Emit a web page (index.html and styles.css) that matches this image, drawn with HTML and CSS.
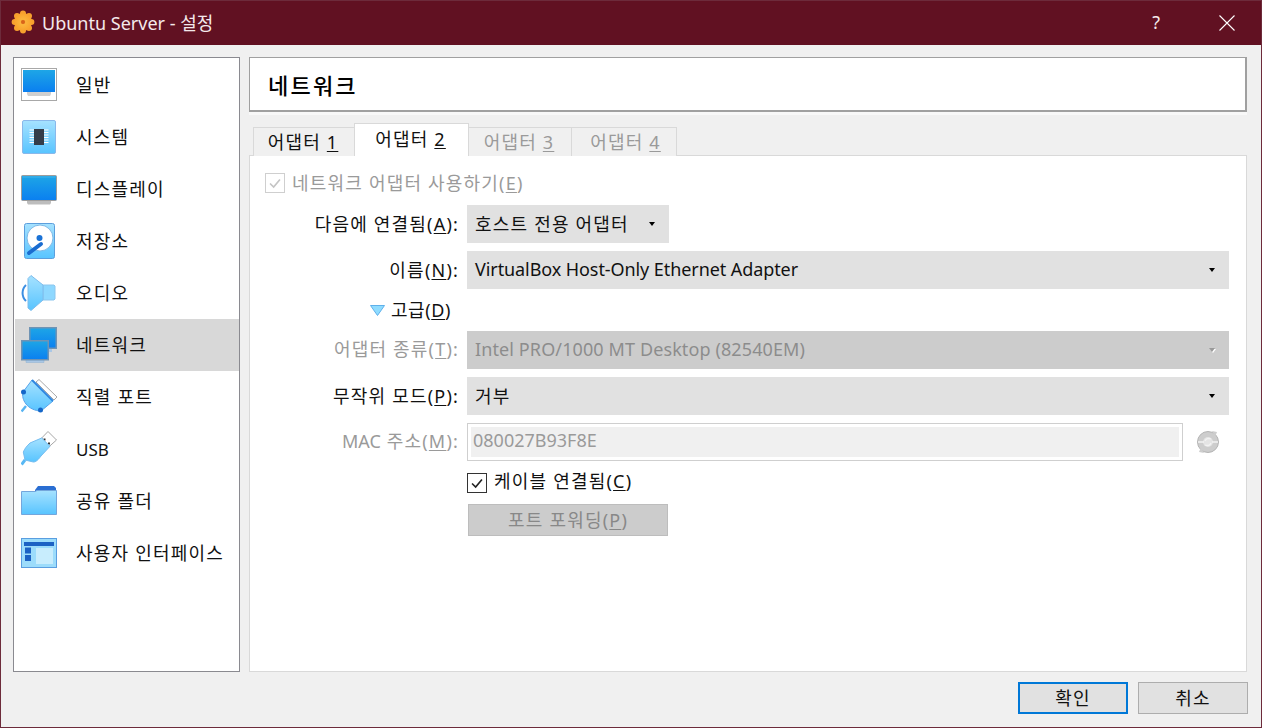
FILE: index.html
```html
<!DOCTYPE html>
<html lang="ko">
<head>
  <meta charset="UTF-8" />
  <title>Ubuntu Server - 설정</title>
  <link rel="stylesheet" href="styles.css">
</head>
<body>

  <!-- gradientes dos icones -->
  <svg class="defs" width="0" height="0">
    <defs>
      <linearGradient id="screen" x1="0" y1="0" x2="0" y2="1">
        <stop offset="0" stop-color="#1ea6e6"/>
        <stop offset="1" stop-color="#0a7ff0"/>
      </linearGradient>
      <linearGradient id="light" x1="0" y1="0" x2="0" y2="1">
        <stop offset="0" stop-color="#a6e2ff"/>
        <stop offset="1" stop-color="#58c4ff"/>
      </linearGradient>
      <radialGradient id="sun">
        <stop offset="0" stop-color="#e8761c"/>
        <stop offset="0.3" stop-color="#fbb53c"/>
        <stop offset="1" stop-color="#f9a12c"/>
      </radialGradient>
    </defs>
  </svg>

  <div class="window">
    <div class="titlebar">
      <svg class="app-icon" viewBox="0 0 24 24">
        <g fill="#f7a02e">
          <circle cx="12" cy="3.6" r="3"/>
          <circle cx="12" cy="20.4" r="3"/>
          <circle cx="3.6" cy="12" r="3"/>
          <circle cx="20.4" cy="12" r="3"/>
          <circle cx="6" cy="6" r="3"/>
          <circle cx="18" cy="6" r="3"/>
          <circle cx="6" cy="18" r="3"/>
          <circle cx="18" cy="18" r="3"/>
        </g>
        <circle cx="12" cy="12" r="9" fill="url(#sun)"/>
        <circle cx="12" cy="12" r="2" fill="#d9641a"/>
      </svg>
      <span class="title">Ubuntu Server - 설정</span>
      <span class="help">?</span>
      <svg class="close" viewBox="0 0 16 16">
        <path d="M0.5 0.5L15.5 15.5M15.5 0.5L0.5 15.5" stroke="#fff" stroke-width="1.1" fill="none"/>
      </svg>
    </div>

    <div class="content">
      <!-- lista lateral -->
      <div class="sidebar">
        <div class="side-item">
          <svg class="side-icon" viewBox="0 0 36 36">
            <rect x="0.5" y="1.5" width="35" height="32" fill="#fff" stroke="#a8a8a8"/>
            <rect x="2" y="3" width="32" height="22" fill="url(#screen)"/>
            <path d="M6 25H30V27L29 29H7L6 27Z" fill="#cfcfcf"/>
          </svg>
          <span>일반</span>
        </div>
        <div class="side-item">
          <svg class="side-icon" viewBox="0 0 36 36">
            <rect x="1.5" y="1.5" width="33" height="33" rx="1.5" fill="url(#light)" stroke="#8ab8ea"/>
            <path d="M8.5 11H27.5M8.5 13.5H27.5M8.5 16H27.5M8.5 18.5H27.5M8.5 21H27.5M8.5 23.5H27.5" stroke="#fff" stroke-width="1.2"/>
            <rect x="13" y="10" width="10" height="16" fill="#343d4a"/>
          </svg>
          <span>시스템</span>
        </div>
        <div class="side-item">
          <svg class="side-icon" viewBox="0 0 36 36">
            <path d="M6 28H30V32L29 33.5H7L6 32Z" fill="#bdbdbd"/>
            <rect x="0.5" y="4.5" width="35" height="25" rx="1" fill="url(#screen)" stroke="#9c9c9c"/>
            <rect x="1.5" y="5.5" width="33" height="1" fill="#44b4ea"/>
          </svg>
          <span>디스플레이</span>
        </div>
        <div class="side-item">
          <svg class="side-icon" viewBox="0 0 36 36">
            <rect x="3.5" y="0.5" width="30" height="35" rx="2" fill="url(#light)" stroke="#5c9edc"/>
            <circle cx="19" cy="15" r="13" fill="#fff" stroke="#7fb9e6" stroke-width="1"/>
            <circle cx="18.5" cy="15" r="3" fill="#1a72d6"/>
            <path d="M8 30L20 21" stroke="#1a6cd0" stroke-width="4" stroke-linecap="round"/>
          </svg>
          <span>저장소</span>
        </div>
        <div class="side-item">
          <svg class="side-icon" viewBox="0 0 36 36">
            <path d="M22 10H33L34 11V24L33 25H22Z" fill="#8ed8ff" stroke="#8cc6ee"/>
            <path d="M7 3.5L10 0.5L22 10V25L10 35.5L7 33Z" fill="url(#light)" stroke="#7cbcec"/>
            <path d="M5 10A11 11 0 0 0 5 26" fill="none" stroke="#3b8ee2" stroke-width="2"/>
          </svg>
          <span>오디오</span>
        </div>
        <div class="side-item active">
          <svg class="side-icon" viewBox="0 0 36 36">
            <path d="M13 21H31V25H13Z" fill="#a9c7e6"/>
            <rect x="8.75" y="0.75" width="26.5" height="20.5" fill="url(#screen)" stroke="#6f93b4" stroke-width="1.5"/>
            <path d="M5 32H23V35.5H5Z" fill="#a9c7e6" stroke="#8fb0d0" stroke-width="0.5"/>
            <rect x="0.75" y="13.75" width="26.5" height="19" fill="url(#screen)" stroke="#6f93b4" stroke-width="1.5"/>
          </svg>
          <span>네트워크</span>
        </div>
        <div class="side-item">
          <svg class="side-icon" viewBox="0 0 36 36">
            <path d="M15 3L18 0.5L36 18L33 21Z" fill="#fff" stroke="#a9a9a9"/>
            <path d="M11 1L32 22L20 32C14 32 8 29 5 25C2 21 1 17 2 13Z" fill="url(#light)" stroke="#58a4ea"/>
            <path d="M11 1L32 22" stroke="#2f86e0" stroke-width="2"/>
            <path d="M5 27L0.5 32.5" stroke="#58b4f2" stroke-width="2.5"/>
            <circle cx="2.5" cy="13" r="2.5" fill="#1566c8"/>
            <circle cx="19.5" cy="31" r="2.5" fill="#1566c8"/>
          </svg>
          <span>직렬 포트</span>
        </div>
        <div class="side-item">
          <svg class="side-icon" viewBox="0 0 36 36">
            <path d="M20.7 7L27 0.5L35.5 9L28 15.7Z" fill="#fff" stroke="#a6a6a6"/>
            <rect x="22.5" y="7.5" width="2" height="2" fill="#333"/>
            <rect x="27" y="11.5" width="2" height="2" fill="#333"/>
            <path d="M20.7 7L29 15.3L20 25C17 29 15 31 12.3 31L4 29L2.3 21C4 17 6 15 9 12Z" fill="url(#light)" stroke="#74bcf0"/>
            <path d="M4 29L0.5 33.5" stroke="#58b8f4" stroke-width="3"/>
          </svg>
          <span class="latin usb">USB</span>
        </div>
        <div class="side-item">
          <svg class="side-icon" viewBox="0 0 36 36">
            <path d="M14 7L17 3H33L35 5V9H14Z" fill="#2a6ed2"/>
            <path d="M0.5 8.5H14L16 7.5H35.5V31.5H0.5Z" fill="url(#light)" stroke="#74a6dc"/>
          </svg>
          <span>공유 폴더</span>
        </div>
        <div class="side-item">
          <svg class="side-icon" viewBox="0 0 36 36">
            <rect x="0.5" y="3.5" width="35" height="29" fill="#9cdcfb" stroke="#5a9ee0"/>
            <rect x="3" y="7" width="30" height="4" fill="#1c62c4"/>
            <rect x="4" y="12.5" width="6" height="6" fill="#1c62c4"/>
            <rect x="4" y="20" width="6" height="6" fill="#1c62c4"/>
            <rect x="15" y="13" width="17" height="16" fill="#c8edfd"/>
          </svg>
          <span>사용자 인터페이스</span>
        </div>
      </div>

      <div class="main">
        <div class="page-header">네트워크</div>

        <div class="tabs">
          <div class="tab"><span>어댑터 <u>1</u></span></div>
          <div class="tab selected"><span>어댑터 <u>2</u></span></div>
          <div class="tab off"><span>어댑터 <u>3</u></span></div>
          <div class="tab off last"><span>어댑터 <u>4</u></span></div>
        </div>

        <div class="panel">
          <div class="check-row off">
            <span class="check">
              <svg viewBox="0 0 20 20"><path d="M4.5 10.5L8.5 14.5L15.5 6" fill="none" stroke="#c4c4c4" stroke-width="1.8"/></svg>
            </span>
            <span>네트워크 어댑터 사용하기(<u>E</u>)</span>
          </div>

          <div class="form">
            <label class="form-label"><span>다음에 연결됨(<u>A</u>):</span></label>
            <div class="combo short"><span>호스트 전용 어댑터</span><i class="arrow"></i></div>

            <label class="form-label"><span>이름(<u>N</u>):</span></label>
            <div class="combo"><span class="latin name">VirtualBox Host-Only Ethernet Adapter</span><i class="arrow"></i></div>

            <div class="advanced">
              <svg class="triangle" viewBox="0 0 15 11"><path d="M0.5 0.5H14.5L7.5 10.5Z" fill="#8fdcff" stroke="#5fb0ea"/></svg>
              <span>고급(<u>D</u>)</span>
            </div>
            <div></div>

            <label class="form-label off"><span>어댑터 종류(<u>T</u>):</span></label>
            <div class="combo disabled"><span class="latin type">Intel PRO/1000 MT Desktop (82540EM)</span><i class="arrow"></i></div>

            <label class="form-label"><span>무작위 모드(<u>P</u>):</span></label>
            <div class="combo"><span>거부</span><i class="arrow"></i></div>

            <label class="form-label off"><span><span class="latin">MAC</span> 주소(<u>M</u>):</span></label>
            <div class="mac-row">
              <div class="mac-field"><span class="latin">080027B93F8E</span></div>
              <svg class="refresh" viewBox="0 0 22 24">
                <circle cx="11" cy="12" r="10.5" fill="#cdcdcd" stroke="#b4b4b4"/>
                <path d="M15 1L20 2L18 7Z" fill="#cdcdcd"/>
                <path d="M7 23L2 22L4 17Z" fill="#cdcdcd"/>
                <circle cx="11" cy="12" r="5" fill="#e4e4e4"/>
                <path d="M1 12H7M21 12H15M8 11C9 8.5 11.5 8 14 9M14 13C13 15.5 10.5 16 8 15" fill="none" stroke="#f2f2f2" stroke-width="1.3"/>
              </svg>
            </div>

            <div></div>
            <div class="check-row cable">
              <span class="check on">
                <svg viewBox="0 0 20 20"><path d="M4.5 10.5L8.5 14.5L15.5 6" fill="none" stroke="#222" stroke-width="1.8"/></svg>
              </span>
              <span>케이블 연결됨(<u>C</u>)</span>
            </div>

            <div></div>
            <div class="port-row"><div class="port-button"><span>포트 포워딩(<u>P</u>)</span></div></div>
          </div>
        </div>
      </div>
    </div>

    <div class="footer">
      <div class="button default">확인</div>
      <div class="button">취소</div>
    </div>
  </div>

</body>
</html>
```

FILE: styles.css
```css
* {
  box-sizing: border-box;
}

html, body {
  margin: 0;
  padding: 0;
}

body {
  font-family: "Noto Sans", "Noto Sans CJK KR", sans-serif;
  font-size: 18px;
  letter-spacing: 1.2px;
  color: #111;
  background-color: #f0f0f0;
}

u {
  text-underline-offset: 2px;
}

.latin {
  letter-spacing: 0;
}

.defs {
  position: absolute;
}

.window {
  width: 1262px;
  height: 728px;
  display: flex;
  flex-direction: column;
  border: 1px solid #6d2b3b;
  background-color: #f0f0f0;
  overflow: hidden;
}

/* barra de titulo */
.titlebar {
  height: 44px;
  flex: none;
  display: flex;
  align-items: center;
  padding-left: 10px;
  background-color: #611122;
  color: #f4e9eb;
}

.app-icon {
  width: 24px;
  height: 24px;
  margin-top: -3px;
}

.title {
  margin-left: 7px;
  padding-bottom: 2px;
  letter-spacing: 0;
}

.help {
  margin-left: auto;
  margin-right: 59px;
  padding-bottom: 2px;
  letter-spacing: 0;
}

.close {
  width: 16px;
  height: 16px;
  margin-right: 26px;
}

.content {
  flex: 1;
  display: flex;
  gap: 9px;
  padding: 12px 14px 0 12px;
  min-height: 0;
}

/* lista lateral */
.sidebar {
  width: 227px;
  flex: none;
  border: 1px solid #8a8a90;
  background-color: #fff;
  padding: 1px 0 0 1px;
}

.side-item {
  height: 52px;
  display: flex;
  align-items: center;
  gap: 19px;
  padding-left: 6px;
}

.side-item span {
  padding-bottom: 2px;
}

.side-item span.usb {
  font-size: 17px;
  padding-bottom: 0;
}

.side-item.active {
  background-color: #d8d8d8;
}

.side-icon {
  width: 36px;
  height: 36px;
  flex: none;
}

.main {
  flex: 1;
  display: flex;
  flex-direction: column;
}

.page-header {
  height: 55px;
  flex: none;
  display: flex;
  align-items: center;
  padding-left: 18px;
  padding-bottom: 1px;
  font-size: 22px;
  letter-spacing: 2.2px;
  font-weight: 500;
  color: #000;
  background-color: #fff;
  border: 1px solid #a0a0a0;
  border-width: 1px 2px 2px 1px;
  box-shadow: 0 3px 0 #f8f8f8;
}

/* abas */
.tabs {
  flex: none;
  height: 33px;
  margin-top: 11px;
  margin-bottom: -1px;
  padding-left: 4px;
  display: flex;
  align-items: flex-end;
  position: relative;
}

.tab {
  height: 29px;
  width: 102px;
  display: flex;
  align-items: center;
  justify-content: center;
  padding: 0 2px 2px 0;
  background-color: #f0f0f0;
  border: 1px solid #d9d9d9;
  border-bottom: none;
  margin-right: -1px;
}

.tab.selected {
  height: 33px;
  width: 115px;
  background-color: #fff;
  position: relative;
  z-index: 1;
  padding-bottom: 4px;
}

.tab.off {
  width: 104px;
  color: #9a9a9a;
}

.tab.last {
  width: 106px;
  padding-left: 5px;
}

.panel {
  flex: 1;
  background-color: #fff;
  border: 1px solid #d9d9d9;
  padding: 17px 17px 0 15px;
}

.check-row {
  display: flex;
  align-items: center;
  height: 20px;
  gap: 7px;
}

.check-row > span:last-child {
  padding-bottom: 2px;
}

.check-row.off {
  color: #9a9a9a;
}

.check {
  width: 20px;
  height: 20px;
  flex: none;
  background-color: #fff;
  border: 1px solid #cfcfcf;
}

.check.on {
  border-color: #333;
}

.check svg {
  display: block;
  width: 18px;
  height: 18px;
}

.form {
  margin-top: 12px;
  display: grid;
  grid-template-columns: 194px 1fr;
  grid-template-rows: 38px 38px 26px 38px 38px 38px 27px 32px;
  column-gap: 8px;
  row-gap: 8px;
}

.form-label {
  display: flex;
  align-items: center;
  justify-content: flex-end;
  padding-bottom: 2px;
}

.form-label.off {
  padding-bottom: 4px;
  color: #9a9a9a;
}

.combo {
  display: flex;
  align-items: center;
  justify-content: space-between;
  padding: 0 14px 0 8px;
  background-color: #e1e1e1;
}

.combo span {
  padding-bottom: 3px;
}

.combo span.name {
  letter-spacing: -0.08px;
}

.combo span.type {
  letter-spacing: 0.11px;
}

.combo.short {
  width: 202px;
}

.combo.disabled {
  background-color: #cccccc;
  color: #8c8c8c;
}

.arrow {
  width: 0;
  height: 0;
  border-left: 3px solid transparent;
  border-right: 3px solid transparent;
  border-top: 4px solid #000;
}

.combo.disabled .arrow {
  border-top-color: #999;
  filter: drop-shadow(1px 1px 0 #fff);
}

.advanced {
  display: flex;
  align-items: center;
  justify-content: flex-end;
  gap: 6px;
  padding-right: 8px;
}

.advanced span {
  padding-bottom: 2px;
  letter-spacing: 0.6px;
}

.triangle {
  width: 15px;
  height: 11px;
}

.mac-row {
  display: flex;
  align-items: center;
  gap: 14px;
  padding-right: 10px;
}

.mac-field {
  flex: 1;
  height: 38px;
  border: 1px solid #cfcfcf;
  padding: 3px;
  color: #9a9a9a;
}

.mac-field span {
  display: block;
  height: 100%;
  line-height: 27px;
  padding-left: 2px;
  background-color: #f0f0f0;
}

.refresh {
  width: 22px;
  height: 24px;
  flex: none;
}

.check-row.cable {
  height: 27px;
}

.check-row.cable > span:last-child {
  padding-bottom: 5px;
}

.port-row {
  padding-left: 1px;
}

.port-button {
  width: 200px;
  height: 32px;
  display: flex;
  align-items: center;
  justify-content: center;
  padding-bottom: 2px;
  background-color: #cccccc;
  border: 1px solid #bdbdbd;
  color: #888;
}

/* botoes */
.footer {
  height: 55px;
  flex: none;
  display: flex;
  justify-content: flex-end;
  gap: 10px;
  padding: 10px 13px 0 0;
}

.button {
  width: 110px;
  height: 32px;
  display: flex;
  align-items: center;
  justify-content: center;
  padding-bottom: 2px;
  background-color: #e1e1e1;
  border: 1px solid #adadad;
}

.button.default {
  border: 2px solid #0078d7;
}
```
